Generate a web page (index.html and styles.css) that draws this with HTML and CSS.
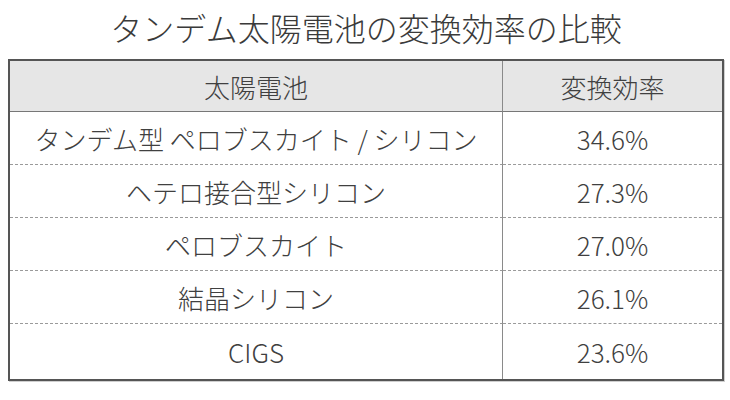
FILE: index.html
```html
<!DOCTYPE html>
<html lang="ja">
<head>
<meta charset="utf-8">
<link rel="stylesheet" href="styles.css">
</head>
<body>
<div class="page">
  <h1 class="title">タンデム太陽電池の変換効率の比較</h1>
  <table class="cmp">
    <thead>
      <tr><th class="c-name">太陽電池</th><th class="c-val">変換効率</th></tr>
    </thead>
    <tbody>
      <tr><td class="c-name">タンデム型 ペロブスカイト / シリコン</td><td class="c-val">34.6%</td></tr>
      <tr><td class="c-name">ヘテロ接合型シリコン</td><td class="c-val">27.3%</td></tr>
      <tr><td class="c-name">ペロブスカイト</td><td class="c-val">27.0%</td></tr>
      <tr><td class="c-name">結晶シリコン</td><td class="c-val">26.1%</td></tr>
      <tr><td class="c-name">CIGS</td><td class="c-val">23.6%</td></tr>
    </tbody>
  </table>
</div>
</body>
</html>
```
FILE: styles.css
```css
html, body {
  margin: 0;
  padding: 0;
  background: #ffffff;
}
body {
  font-family: "Noto Sans CJK JP", "Noto Sans", sans-serif;
  color: #444444;
}
.page {
  width: 730px;
  height: 400px;
  padding: 0 6px 0 8px;
  box-sizing: border-box;
}
.title {
  margin: 0;
  height: 59px;
  font-size: 32px;
  font-weight: 300;
  line-height: 54px;
  text-align: center;
  color: #3a3a3a;
  letter-spacing: 0;
}
.cmp {
  width: 716px;
  border-collapse: separate;
  border-spacing: 0;
  border: 2px solid #555555;
  box-shadow: 1px 1px 0 #cfcfcf;
  table-layout: fixed;
}
.cmp th, .cmp td {
  padding: 0;
  text-align: center;
  font-size: 26px;
  font-weight: 300;
  color: #404040;
}
.cmp th {
  background: #e6e6e6;
  height: 50px;
  border-bottom: 1px solid #777777;
}
.cmp td {
  height: 52px;
  border-bottom: 1px dashed #9a9a9a;
}
.cmp tbody tr:last-child td {
  border-bottom: none;
  height: 55px;
}
.c-name {
  width: 492px;
  border-right: 1px solid #8a8a8a;
}
.cmp .c-val {
  border-right: none;
}
```
